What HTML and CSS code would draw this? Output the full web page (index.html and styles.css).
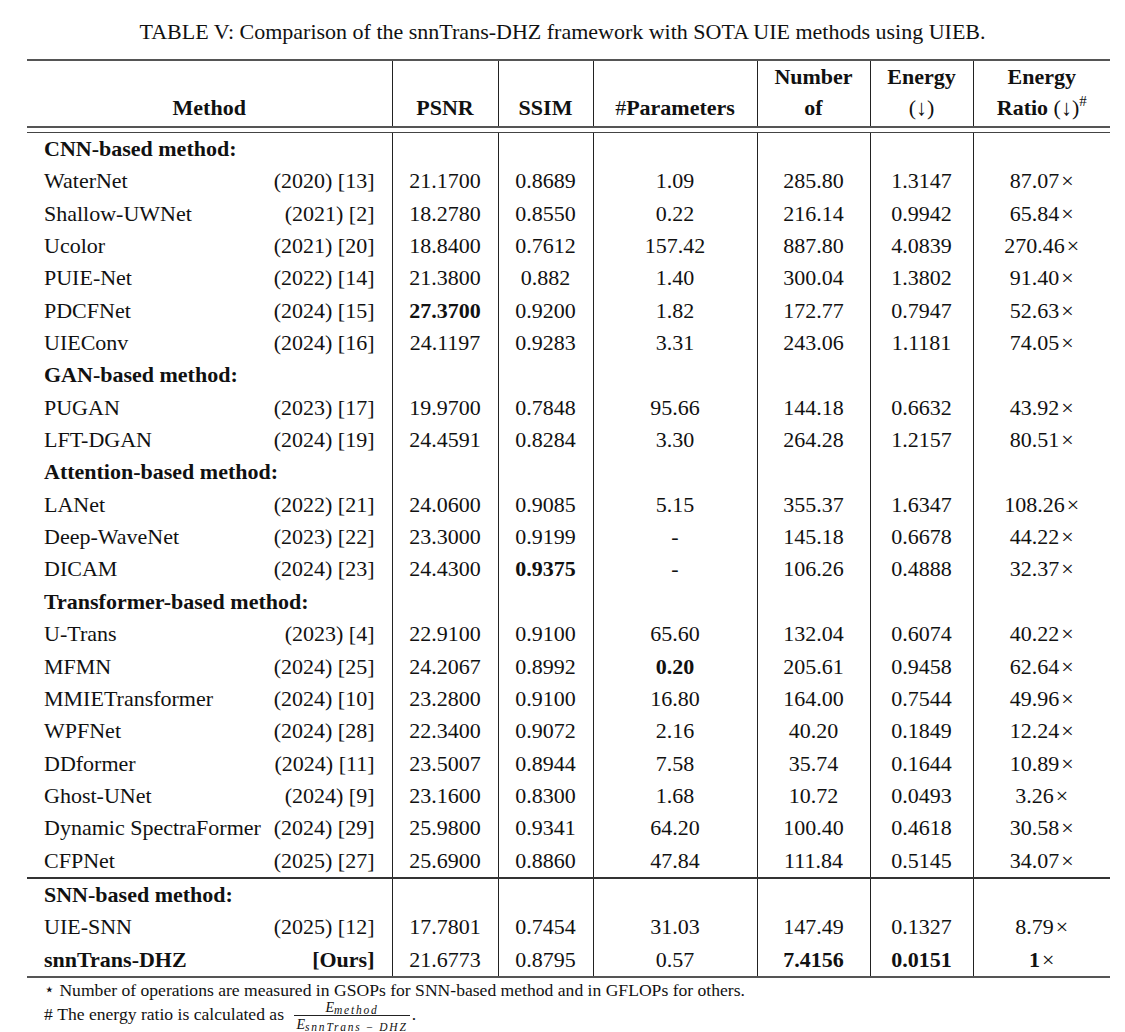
FILE: index.html
```html
<!DOCTYPE html>
<html>
<head>
<meta charset="utf-8">
<link rel="stylesheet" href="styles.css">
</head>
<body>
<div class="page">
  <p class="caption">TABLE V: Comparison of the snnTrans-DHZ framework with SOTA UIE methods using UIEB.</p>
  <table class="cmp">
    <colgroup>
      <col class="c-method"><col class="c-psnr"><col class="c-ssim"><col class="c-params"><col class="c-num"><col class="c-energy"><col class="c-ratio">
    </colgroup>
    <thead>
      <tr>
        <th>Method</th><th>PSNR</th><th>SSIM</th><th><span class="hash">#</span>Parameters</th><th>Number<br>of</th><th>Energy<br><span class="arr">(↓)</span></th><th>Energy<br>Ratio <span class="arr">(↓)</span><sup>#</sup></th>
      </tr>
    </thead>
    <tbody>
      <tr class="gap"><td colspan="7"></td></tr>
      <tr><td class="m"><b>CNN-based method:</b></td><td></td><td></td><td></td><td></td><td></td><td></td></tr>
      <tr><td class="m"><div class="mr"><span>WaterNet</span><span>(2020) [13]</span></div></td><td>21.1700</td><td>0.8689</td><td>1.09</td><td>285.80</td><td>1.3147</td><td>87.07<span class="x">×</span></td></tr>
      <tr><td class="m"><div class="mr"><span>Shallow-UWNet</span><span>(2021) [2]</span></div></td><td>18.2780</td><td>0.8550</td><td>0.22</td><td>216.14</td><td>0.9942</td><td>65.84<span class="x">×</span></td></tr>
      <tr><td class="m"><div class="mr"><span>Ucolor</span><span>(2021) [20]</span></div></td><td>18.8400</td><td>0.7612</td><td>157.42</td><td>887.80</td><td>4.0839</td><td>270.46<span class="x">×</span></td></tr>
      <tr><td class="m"><div class="mr"><span>PUIE-Net</span><span>(2022) [14]</span></div></td><td>21.3800</td><td>0.882</td><td>1.40</td><td>300.04</td><td>1.3802</td><td>91.40<span class="x">×</span></td></tr>
      <tr><td class="m"><div class="mr"><span>PDCFNet</span><span>(2024) [15]</span></div></td><td><b>27.3700</b></td><td>0.9200</td><td>1.82</td><td>172.77</td><td>0.7947</td><td>52.63<span class="x">×</span></td></tr>
      <tr><td class="m"><div class="mr"><span>UIEConv</span><span>(2024) [16]</span></div></td><td>24.1197</td><td>0.9283</td><td>3.31</td><td>243.06</td><td>1.1181</td><td>74.05<span class="x">×</span></td></tr>
      <tr><td class="m"><b>GAN-based method:</b></td><td></td><td></td><td></td><td></td><td></td><td></td></tr>
      <tr><td class="m"><div class="mr"><span>PUGAN</span><span>(2023) [17]</span></div></td><td>19.9700</td><td>0.7848</td><td>95.66</td><td>144.18</td><td>0.6632</td><td>43.92<span class="x">×</span></td></tr>
      <tr><td class="m"><div class="mr"><span>LFT-DGAN</span><span>(2024) [19]</span></div></td><td>24.4591</td><td>0.8284</td><td>3.30</td><td>264.28</td><td>1.2157</td><td>80.51<span class="x">×</span></td></tr>
      <tr><td class="m"><b>Attention-based method:</b></td><td></td><td></td><td></td><td></td><td></td><td></td></tr>
      <tr><td class="m"><div class="mr"><span>LANet</span><span>(2022) [21]</span></div></td><td>24.0600</td><td>0.9085</td><td>5.15</td><td>355.37</td><td>1.6347</td><td>108.26<span class="x">×</span></td></tr>
      <tr><td class="m"><div class="mr"><span>Deep-WaveNet</span><span>(2023) [22]</span></div></td><td>23.3000</td><td>0.9199</td><td>-</td><td>145.18</td><td>0.6678</td><td>44.22<span class="x">×</span></td></tr>
      <tr><td class="m"><div class="mr"><span>DICAM</span><span>(2024) [23]</span></div></td><td>24.4300</td><td><b>0.9375</b></td><td>-</td><td>106.26</td><td>0.4888</td><td>32.37<span class="x">×</span></td></tr>
      <tr><td class="m"><b>Transformer-based method:</b></td><td></td><td></td><td></td><td></td><td></td><td></td></tr>
      <tr><td class="m"><div class="mr"><span>U-Trans</span><span>(2023) [4]</span></div></td><td>22.9100</td><td>0.9100</td><td>65.60</td><td>132.04</td><td>0.6074</td><td>40.22<span class="x">×</span></td></tr>
      <tr><td class="m"><div class="mr"><span>MFMN</span><span>(2024) [25]</span></div></td><td>24.2067</td><td>0.8992</td><td><b>0.20</b></td><td>205.61</td><td>0.9458</td><td>62.64<span class="x">×</span></td></tr>
      <tr><td class="m"><div class="mr"><span>MMIETransformer</span><span>(2024) [10]</span></div></td><td>23.2800</td><td>0.9100</td><td>16.80</td><td>164.00</td><td>0.7544</td><td>49.96<span class="x">×</span></td></tr>
      <tr><td class="m"><div class="mr"><span>WPFNet</span><span>(2024) [28]</span></div></td><td>22.3400</td><td>0.9072</td><td>2.16</td><td>40.20</td><td>0.1849</td><td>12.24<span class="x">×</span></td></tr>
      <tr><td class="m"><div class="mr"><span>DDformer</span><span>(2024) [11]</span></div></td><td>23.5007</td><td>0.8944</td><td>7.58</td><td>35.74</td><td>0.1644</td><td>10.89<span class="x">×</span></td></tr>
      <tr><td class="m"><div class="mr"><span>Ghost-UNet</span><span>(2024) [9]</span></div></td><td>23.1600</td><td>0.8300</td><td>1.68</td><td>10.72</td><td>0.0493</td><td>3.26<span class="x">×</span></td></tr>
      <tr><td class="m"><div class="mr"><span>Dynamic SpectraFormer</span><span>(2024) [29]</span></div></td><td>25.9800</td><td>0.9341</td><td>64.20</td><td>100.40</td><td>0.4618</td><td>30.58<span class="x">×</span></td></tr>
      <tr><td class="m"><div class="mr"><span>CFPNet</span><span>(2025) [27]</span></div></td><td>25.6900</td><td>0.8860</td><td>47.84</td><td>111.84</td><td>0.5145</td><td>34.07<span class="x">×</span></td></tr>
      <tr class="div-top"><td class="m"><b>SNN-based method:</b></td><td></td><td></td><td></td><td></td><td></td><td></td></tr>
      <tr><td class="m"><div class="mr"><span>UIE-SNN</span><span>(2025) [12]</span></div></td><td>17.7801</td><td>0.7454</td><td>31.03</td><td>147.49</td><td>0.1327</td><td>8.79<span class="x">×</span></td></tr>
      <tr class="last"><td class="m"><div class="mr"><b>snnTrans-DHZ</b><b>[Ours]</b></div></td><td>21.6773</td><td>0.8795</td><td>0.57</td><td><b>7.4156</b></td><td><b>0.0151</b></td><td><b>1</b><span class="x">×</span></td></tr>
    </tbody>
  </table>
  <div class="notes">
    <p class="note"><span class="star">⋆</span> Number of operations are measured in GSOPs for SNN-based method and in GFLOPs for others.</p>
    <p class="note note-frac">#&nbsp;The energy ratio is calculated as <span class="frac"><span class="num"><i>E</i><sub><i>method</i></sub></span><span class="den"><i>E</i><sub><i>snnTrans</i> − <i>DHZ</i></sub></span></span>.</p>
  </div>
</div>
</body>
</html>
```

FILE: styles.css
```css
html, body {
  margin: 0;
  padding: 0;
  background: #ffffff;
}

.page {
  padding: 0 15px 0 27px;
  font-family: "Liberation Serif", "Times New Roman", serif;
  color: #111111;
}

.caption {
  margin: 19px 0 0 -27px;
  width: 1125px;
  text-align: center;
  font-size: 22px;
  line-height: 26px;
}

.cmp {
  margin-top: 14px;
  width: 1083px;
  table-layout: fixed;
  border-collapse: collapse;
  font-size: 22px;
}

.c-method { width: 365px; }
.c-psnr { width: 106px; }
.c-ssim { width: 95px; }
.c-params { width: 164px; }
.c-num { width: 113px; }
.c-energy { width: 103px; }
.c-ratio { width: 137px; }

.cmp th,
.cmp td {
  padding: 0;
  text-align: center;
  line-height: 32.35px;
  white-space: nowrap;
}

.cmp th + th,
.cmp td + td {
  border-left: 1px solid #222222;
}

.cmp thead tr {
  border-top: 2px solid #555555;
  border-bottom: 2px solid #555555;
}

.cmp thead th {
  height: 59px;
  padding-bottom: 3px;
  line-height: 31px;
  vertical-align: bottom;
  font-weight: bold;
}

.arr {
  font-weight: normal;
}

.hash {
  font-weight: normal;
}

.cmp sup {
  font-size: 15px;
  line-height: 0;
  vertical-align: 9px;
  font-weight: normal;
}

.gap td {
  height: 4px;
  line-height: 0;
  font-size: 0;
  border-bottom: 1px solid #444444;
}

.cmp td.m {
  text-align: left;
  padding: 0 17px;
}

.mr {
  display: flex;
  justify-content: space-between;
}

.x {
  margin-left: 2px;
}

.div-top td {
  border-top: 2px solid #333333;
}

.last td {
  border-bottom: 2px solid #555555;
}

.notes {
  padding-left: 17px;
  font-size: 17.6px;
}

.note {
  margin: 0;
  line-height: 20px;
}

.note:first-child {
  margin-top: 2px;
}

.note-frac {
  margin-top: 0;
  line-height: 28px;
}

.star {
  font-size: 17px;
  font-family: "DejaVu Serif", serif;
  position: relative;
  top: -1px;
}

.frac {
  display: inline-flex;
  flex-direction: column;
  align-items: center;
  vertical-align: middle;
  font-size: 14px;
  line-height: 13px;
  margin: 0 2px 0 6px;
}

.frac .num {
  border-bottom: 1px solid #222222;
  align-self: stretch;
  text-align: center;
  padding: 0 2px 1px;
}

.frac .den {
  padding: 2px 2px 0;
}

.frac sub {
  font-size: 11.5px;
  letter-spacing: 1.8px;
  vertical-align: -2px;
  line-height: 0;
}
```
